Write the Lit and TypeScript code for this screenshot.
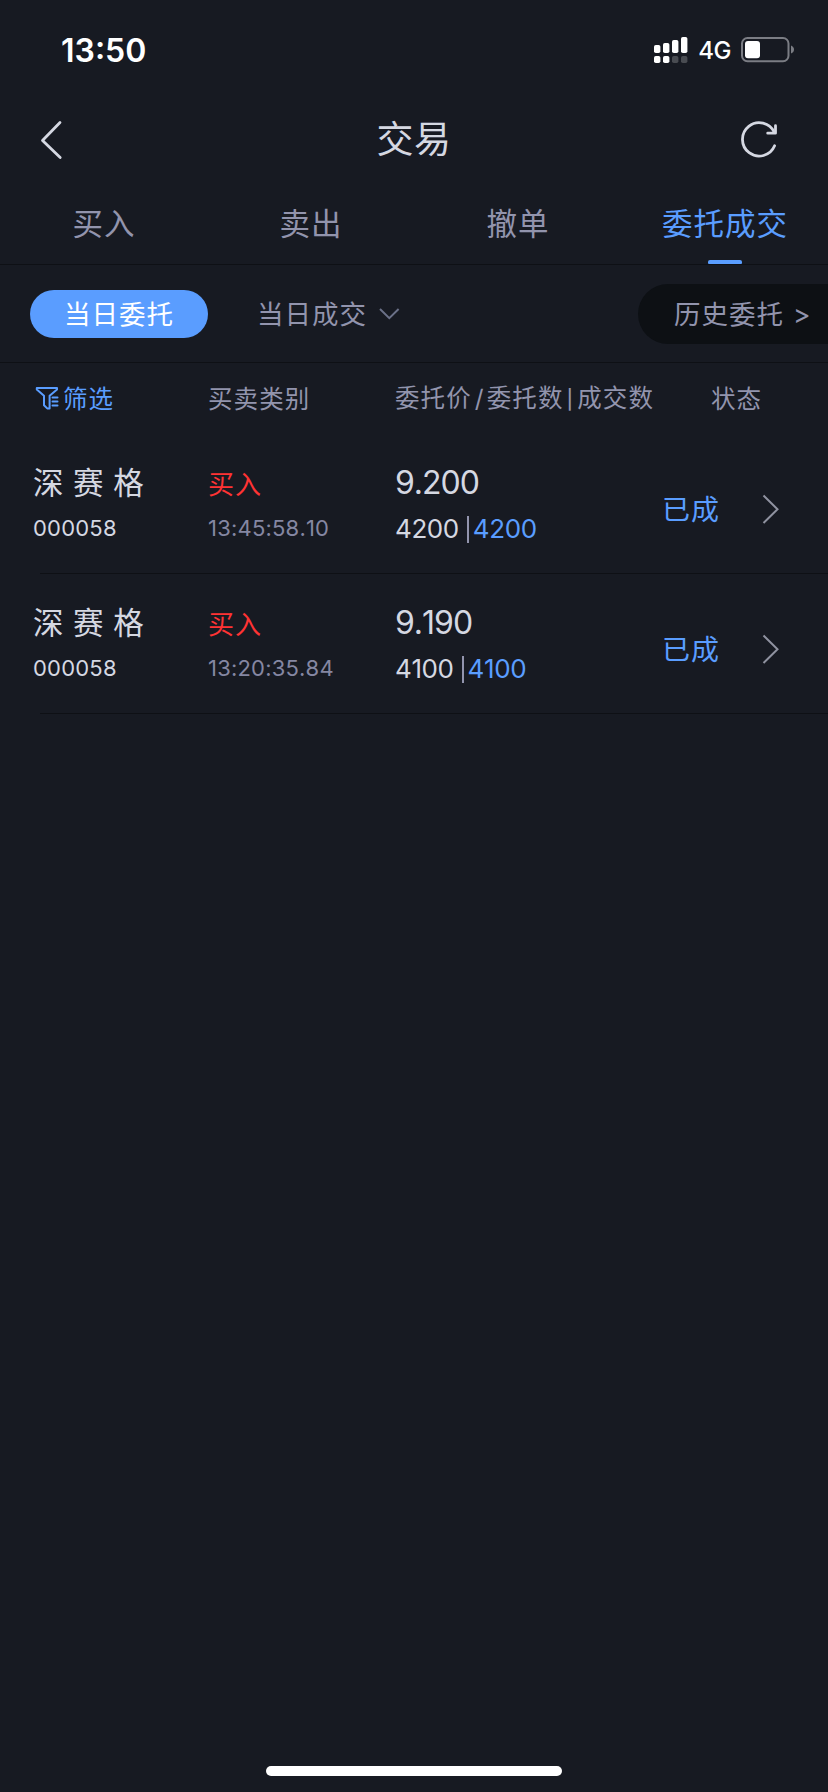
import { LitElement, html, css } from "lit";
import { customElement, property } from "lit/decorators.js";
import { classMap } from "lit/directives/class-map.js";

interface Order {
  name: string;
  code: string;
  side: string;
  time: string;
  price: string;
  qty: string;
  filled: string;
  status: string;
}

const ORDERS: Order[] = [
  { name: "深赛格", code: "000058", side: "买入", time: "13:45:58.10", price: "9.200", qty: "4200", filled: "4200", status: "已成" },
  { name: "深赛格", code: "000058", side: "买入", time: "13:20:35.84", price: "9.190", qty: "4100", filled: "4100", status: "已成" },
];

const TABS = ["买入", "卖出", "撤单", "委托成交"];

@customElement("status-bar")
class StatusBar extends LitElement {
  static styles = css`
    :host {
      display: flex;
      align-items: center;
      justify-content: space-between;
      height: 100px;
      padding: 0 32px 0 61px;
      color: #fff;
      font-family: Inter, sans-serif;
    }
    .time { font-size: 32px; font-weight: 600; line-height: 40px; margin-top: 1px; }
    .right { display: flex; align-items: center; }
    .net { font-size: 24px; font-weight: 500; line-height: 30px; margin: 2px 10px 0 10px; letter-spacing: -0.5px; }
    svg { display: block; }
  `;
  render() {
    return html`
      <span class="time">13:50</span>
      <div class="right">
        <svg width="34" height="26" viewBox="0 0 34 26" fill="#fff">
          <rect x="0" y="8" width="6.4" height="8" rx="1.8" />
          <rect x="9" y="6" width="6.4" height="10" rx="1.8" />
          <rect x="18" y="3" width="6.4" height="13" rx="1.8" />
          <rect x="27" y="0" width="6.4" height="16" rx="1.8" />
          <rect x="0" y="19" width="6.4" height="7" rx="1.8" />
          <rect x="9" y="19" width="6.4" height="7" rx="1.8" />
          <rect x="18" y="19" width="6.4" height="7" rx="1.8" opacity=".22" />
          <rect x="27" y="19" width="6.4" height="7" rx="1.8" opacity=".22" />
        </svg>
        <span class="net">4G</span>
        <svg width="55" height="26" viewBox="0 0 55 26">
          <rect x="1" y="1" width="46.500" height="23.200" rx="5.500" fill="none" stroke="#7b7d84" stroke-width="2" />
          <rect x="4" y="4" width="15" height="17.200" rx="3" fill="#fff" />
          <path d="M50 8.600c2 .8 3 2.200 3 4s-1 3.200-3 4z" fill="#7b7d84" />
        </svg>
      </div>
    `;
  }
}

@customElement("nav-header")
class NavHeader extends LitElement {
  static styles = css`
    :host {
      display: grid;
      grid-template-columns: 120px 1fr 120px;
      align-items: center;
      height: 80px;
      color: #d5d8e2;
    }
    .title { text-align: center; font-size: 37px; line-height: 44px; letter-spacing: 0.6px; margin-top: -7px; }
    .back { margin-left: 40px; }
    .reload { justify-self: end; margin-right: 49px; }
    svg { display: block; fill: none; stroke: currentColor; stroke-width: 2.8; stroke-linecap: round; stroke-linejoin: round; }
  `;
  render() {
    return html`
      <svg class="back" width="24" height="40" viewBox="0 0 24 40"><path d="M20 2.500 2.500 20.500 20.200 37.500" /></svg>
      <span class="title">交易</span>
      <svg class="reload" width="38" height="40" viewBox="0 0 38 40">
        <path d="M33.600 25.800A16.700 16.700 0 1 1 33.400 12.500" />
        <path d="M34.500 5.700V13.200H26.700" />
      </svg>
    `;
  }
}

@customElement("tab-strip")
class TabStrip extends LitElement {
  static styles = css`
    :host {
      display: grid;
      grid-template-columns: repeat(4, 1fr);
      height: 84px;
      border-bottom: 1px solid #0e1015;
      color: #9294ad;
    }
    .tab { display: flex; flex-direction: column; align-items: center; justify-content: space-between; }
    .label { font-size: 30.5px; line-height: 40px; letter-spacing: 1px; margin-top: 22px; padding-left: 1px; }
    .bar { width: 34px; height: 4px; border-radius: 2px 2px 1px 1px; }
    .active { color: #5a9dff; }
    .active .bar { background: #5a9dff; }
  `;
  render() {
    return TABS.map(
      (t, i) => html`<div class=${classMap({ tab: true, active: i === 3 })}>
        <span class="label">${t}</span><span class="bar"></span>
      </div>`
    );
  }
}

@customElement("filter-bar")
class FilterBar extends LitElement {
  static styles = css`
    :host {
      display: flex;
      align-items: center;
      height: 97px;
      padding-left: 30px;
      border-bottom: 1px solid #0e1015;
      color: #9294ad;
      font-size: 26.5px;
      letter-spacing: 1px;
      line-height: 36px;
      overflow: hidden;
      white-space: nowrap;
    }
    .today { box-sizing: border-box; width: 178px; height: 48px; line-height: 46px; border-radius: 24px; background: #5a9dff; color: #fff; text-align: center; }
    .deals { margin-left: 49px; margin-top: -2px; }
    .caret { display: block; margin-left: 12px; margin-top: 1px; }
    .history { box-sizing: border-box; flex: none; width: 220px; height: 60px; line-height: 58px; margin-left: auto; margin-right: -30px; padding-left: 36px; border-radius: 30px; background: #0d1014; }
    .gt { font-family: Inter, sans-serif; margin-left: 9px; }
  `;
  render() {
    return html`
      <span class="today">当日委托</span>
      <span class="deals">当日成交</span>
      <svg class="caret" width="21" height="12" viewBox="0 0 21 12" fill="none" stroke="#6b7188" stroke-width="2">
        <path d="M1 1 10.300 10.200 19.600 1" />
      </svg>
      <span class="history">历史委托<span class="gt">&gt;</span></span>
    `;
  }
}

@customElement("list-head")
class ListHead extends LitElement {
  static styles = css`
    :host {
      box-sizing: border-box;
      display: grid;
      grid-template-columns: 173px 187px 316px 1fr;
      align-items: center;
      height: 71px;
      padding: 0 0 2px 35px;
      color: #9294ad;
      font-size: 24.5px;
      line-height: 34px;
      letter-spacing: 1.1px;
      white-space: nowrap;
    }
    .filter { display: flex; align-items: center; color: #5a9dff; }
    .filter svg { display: block; margin: 1px 4px 0 0; }
    .sep { font-family: Inter, sans-serif; }
    .slash { margin: 0 2px 0 3px; }
    .pipe { display: inline-block; font-size: 19px; line-height: 24px; margin: 0 3px; vertical-align: 1px; font-weight: 500; }
  `;
  render() {
    return html`
      <span class="filter">
        <svg width="24" height="24" viewBox="0 0 24 24" fill="none" stroke="currentColor" stroke-width="2" stroke-linejoin="round" stroke-linecap="round">
          <path d="M1.800 2H22V3.600L14.600 9.800V22.400H12.200L9 19.200V9.800L1.800 3.600Z" />
          <path d="M17.500 11.500H22.500M17.500 15.500H22.500M17.500 19.500H22.500" />
        </svg>
        <span>筛选</span>
      </span>
      <span>买卖类别</span>
      <span>委托价<span class="sep slash">/</span>委托数<span class="sep pipe">|</span>成交数</span>
      <span>状态</span>
    `;
  }
}

@customElement("order-row")
class OrderRow extends LitElement {
  @property({ attribute: false }) order!: Order;
  static styles = css`
    :host { display: block; color: #d5d8e2; font-kerning: none; }
    .row {
      display: grid;
      grid-template-columns: 175px 187px 267px 1fr 66px;
      height: 139px;
      padding-left: 33px;
    }
    .line { height: 1px; margin-left: 40px; background: #0e1015; }
    .cell { padding-top: 27px; }
    .name, .side, .price { height: 44px; line-height: 44px; }
    .name { font-size: 30.5px; letter-spacing: 9.6px; line-height: 40px; }
    .side { font-size: 26px; letter-spacing: 1px; color: #ff3334; line-height: 44px; }
    .price { font-family: Inter, sans-serif; font-size: 32px; letter-spacing: -1px; }
    .code, .time, .qty { font-family: Inter, sans-serif; height: 46px; line-height: 46px; }
    .code { font-size: 22px; letter-spacing: 0.2px; }
    .time { font-size: 22px; letter-spacing: 0.2px; color: #8587a2; }
    .qty { display: flex; align-items: center; font-size: 26px; letter-spacing: -0.4px; height: 48px; }
    .divider { width: 2px; height: 27px; margin: 0 4px 0 8px; background: #9294ad; }
    .filled { color: #5a9dff; }
    .status { align-self: center; font-size: 28px; line-height: 40px; letter-spacing: 1px; color: #5a9dff; padding-top: 8px; }
    .chev { display: block; align-self: center; margin-top: 10px; }
  `;
  render() {
    const o = this.order;
    return html`
      <div class="row">
        <div class="cell"><div class="name">${o.name}</div><div class="code">${o.code}</div></div>
        <div class="cell"><div class="side">${o.side}</div><div class="time">${o.time}</div></div>
        <div class="cell">
          <div class="price">${o.price}</div>
          <div class="qty"><span>${o.qty}</span><span class="divider"></span><span class="filled">${o.filled}</span></div>
        </div>
        <span class="status">${o.status}</span>
        <svg class="chev" width="17" height="30" viewBox="0 0 17 30" fill="none" stroke="#8f92a0" stroke-width="2">
          <path d="M1.500 1.500 15.500 15.300 1.500 29" />
        </svg>
      </div>
      <div class="line"></div>
    `;
  }
}

@customElement("app-root")
class AppRoot extends LitElement {
  static styles = css`
    :host {
      display: flex;
      flex-direction: column;
      width: 828px;
      height: 1792px;
      overflow: hidden;
      background: #171a22;
      font-family: "Noto Sans CJK SC", sans-serif;
    }
    .list { flex: 1; }
    .home { align-self: center; width: 296px; height: 10px; border-radius: 5px; background: #fff; margin-bottom: 16px; }
  `;
  render() {
    return html`
      <status-bar></status-bar>
      <nav-header></nav-header>
      <tab-strip></tab-strip>
      <filter-bar></filter-bar>
      <list-head></list-head>
      <div class="list">${ORDERS.map((o) => html`<order-row .order=${o}></order-row>`)}</div>
      <div class="home"></div>
    `;
  }
}
